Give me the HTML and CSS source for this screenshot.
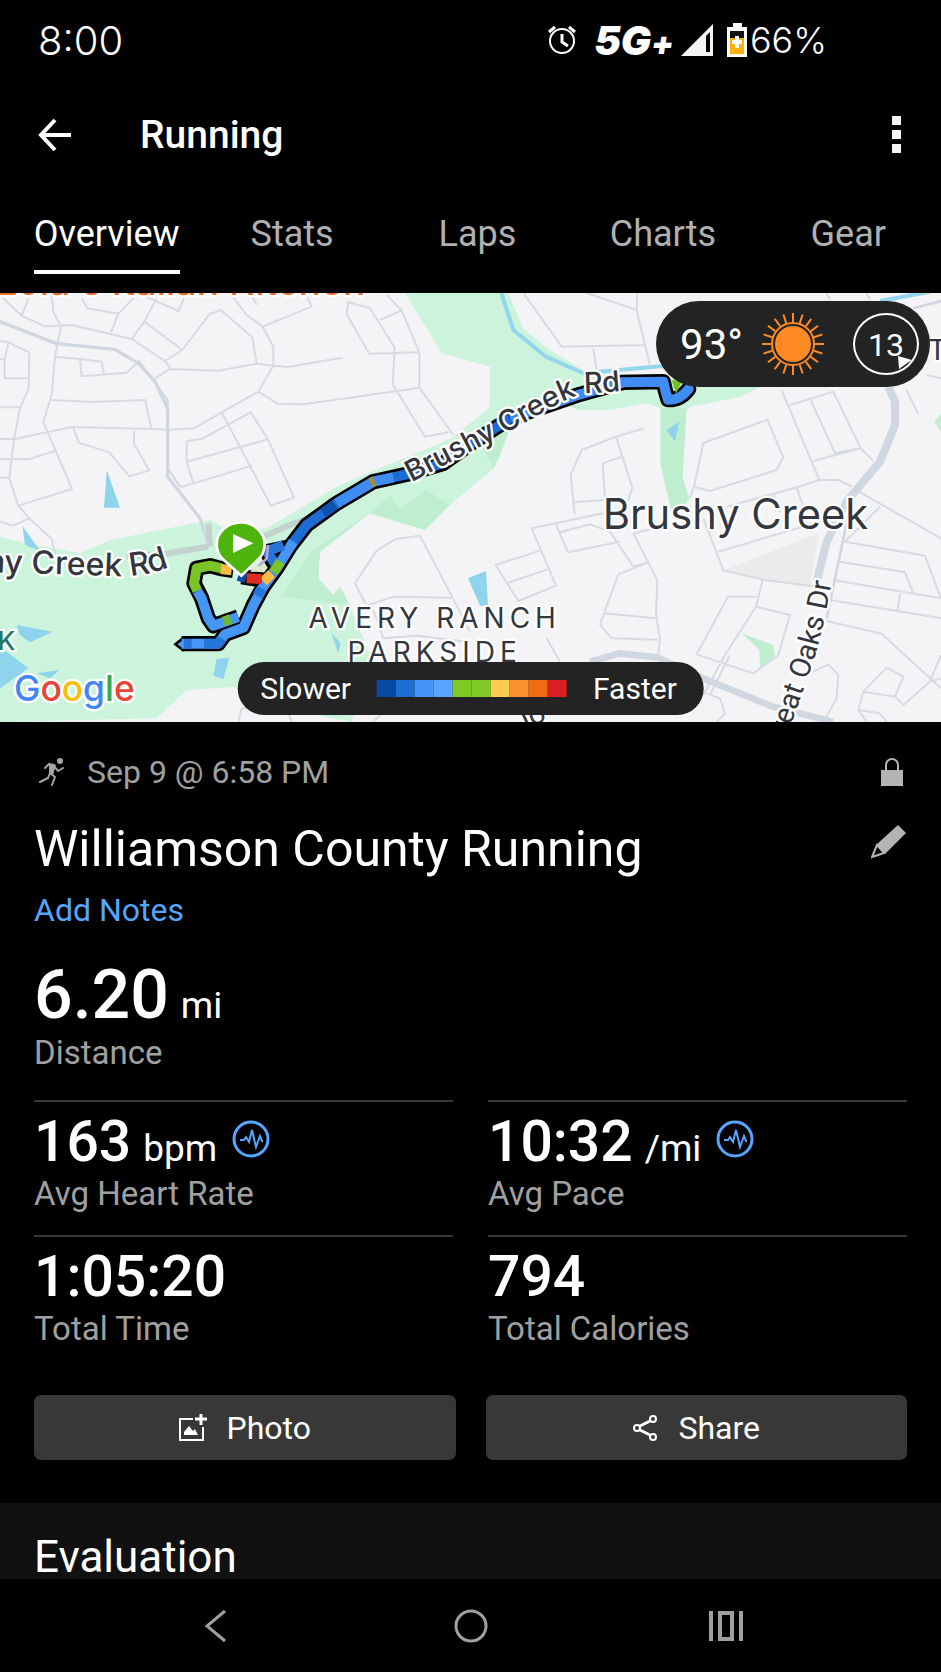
FILE: index.html
```html
<!DOCTYPE html>
<html lang="en">

<head>
  <meta charset="UTF-8">
  <meta name="viewport" content="width=device-width, initial-scale=1.0">
  <title>Running</title>
  <link rel="stylesheet" href="styles.css">
</head>

<body>
  <div class="status-bar">
    <span class="clock">8:00</span>
    <div class="status-icons">
      <svg class="alarm" viewBox="0 0 28 30" width="28" height="30">
        <circle cx="14" cy="16" r="12" fill="none" stroke="#fff" stroke-width="2" />
        <path d="M14 9v8l6 4M1 7l6-5M27 7l-6-5" fill="none" stroke="#fff" stroke-width="3" />
      </svg>
      <span class="network">5G<small>+</small></span>
      <svg class="signal" viewBox="0 0 32 32" width="32" height="32">
        <path d="M0 32L32 0V32Z" fill="#f4f4f4" />
        <path d="M25 12L29 8V28H25Z" fill="#000" />
      </svg>
      <svg class="battery" viewBox="0 0 20 34" width="20" height="34">
        <path d="M6 0h9v4h5v30H0V4h6z" fill="#fff" />
        <path d="M3 8h14v7H3z" fill="#111" />
        <path d="M3 15h14v16H3z" fill="#fdb10b" />
        <path d="M8 13h4v4h3v4h-3v4H8v-4H5v-4h3z" fill="#fff" />
      </svg>
      <span class="percent">66%</span>
    </div>
  </div>

  <header class="app-bar">
    <button class="icon-btn" aria-label="Back">
      <svg viewBox="0 0 34 34" width="34" height="34">
        <path d="M17 2L3 17l14 15M3 17h30" fill="none" stroke="#fff" stroke-width="4" />
      </svg>
    </button>
    <h1>Running</h1>
    <button class="icon-btn" aria-label="More options">
      <svg viewBox="0 0 10 38" width="10" height="38">
        <path d="M1 0h9v9H1zM1 14h9v9H1zM1 28h9v9H1z" fill="#f4f4f4" />
      </svg>
    </button>
  </header>

  <nav class="tabs">
    <a class="active" href="#overview">Overview</a>
    <a href="#stats">Stats</a>
    <a href="#laps">Laps</a>
    <a href="#charts">Charts</a>
    <a href="#gear">Gear</a>
  </nav>

  <main id="overview">
    <section class="map">
      <svg class="map-canvas" viewBox="0 24 2823 1287" preserveAspectRatio="xMidYMid slice">
        <defs>
          <path id="road-a" d="M-400 790Q-160 860 30 864T360 874Q440 874 508 846" />
          <path id="road-b" d="M1234 592Q1350 532 1450 480T1640 376T1770 324T1980 306" />
          <path id="road-c" d="M2300 1520Q2345 1400 2378 1306T2436 1140T2480 970T2500 850" />
        </defs>

        <rect y="24" width="2823" height="1287" fill="#f4f4f6" />

        <!-- parks -->
        <path fill="#ccf4dc" d="M0 755L80 775L240 805L330 765L630 705L690 740L800 730L1020 600L1150 545L1350 462L1410 415L1468 370L1470 245L1325 205L1215 24H1525L1570 130L1640 190L1750 255L1990 280L2290 300L2225 335L2070 365L2056 385L2048 580L2068 640L2050 668H2012L1982 540V370L1940 355L1830 375H1740L1700 360L1530 430L1500 510L1482 550L1350 660L1275 735L1110 685L960 800L955 880L1000 930L1020 905L1060 990L1120 1130L1055 1311L945 1290L715 1205L560 1215L470 1300L0 1311Z" />
        <path fill="#bfeecf" d="M845 935L930 800L1110 685L1170 630L1200 670L1280 615L1350 660L1482 550L1440 480L1530 400L1700 330L1740 375L1700 360L1530 430L1500 510L1482 550L1350 660L1275 735L1110 685L960 800L955 880L1000 930L1020 905L1050 960Z" />
        <path fill="#bfeecf" d="M1982 370H2060L2048 580L2068 640L2050 668H2012L1982 540ZM2803 410L2823 385V440ZM2225 1045L2320 1080L2325 1112L2280 1148L2278 1095Z" />
        <path fill="#ebebec" d="M2172 856L2456 744L2430 903L2290 884Z" />

        <!-- water -->
        <path fill="none" stroke="#93d6ee" stroke-width="12" d="M1504 24L1540 135L1635 213L1750 265L1990 243M2640 48L2790 20" />
        <path fill="#8dd4ec" d="M320 555L312 668H360ZM67 722L75 780L120 797ZM50 1020L158 1040L90 1072L60 1050ZM0 1085L85 1150L0 1210ZM110 1165L178 1155L150 1180ZM650 1122L688 1118L670 1182L640 1172ZM995 1045L1022 1075L1014 1105ZM1404 880L1458 858L1464 962L1440 962ZM2000 435L2038 410L2025 470Z" />

        <!-- streets -->
        <g class="streets">
          <path d="M10 40L65 92L135 124L215 120L395 162L495 228L512 250L465 280M85 40L65 92M155 30L160 80L183 125L165 215L155 330L130 412L167 497L216 612L55 662M245 40L262 70L355 86M400 40L355 86L333 143M470 40L433 110L395 162M433 110L547 195L495 228M440 36L535 78L552 40M547 195L628 88L662 75L757 157L770 236L655 257L512 252M695 30L740 90L788 125L820 185V242L775 320L665 382L583 430L505 434L455 432L215 426L45 462L0 462M757 35L770 60M788 125L935 65L920 30M770 236L862 246L1028 218M775 320L833 356L910 358L1260 308M1040 50L1110 70L1184 188L1178 298L1275 455L1345 442M1045 50L1040 88L1108 206L1258 202V308L1360 450M1160 30L1205 76L1258 202M1140 105L1205 76" />
          <path d="M0 168L25 172L88 203L86 310L60 370L42 462L28 580L55 662L88 700L155 762L168 815M25 172L14 222V280H86M0 222H14M0 367H60M0 522L85 523L167 497M0 578H28M88 700L40 722L0 710M165 215L240 222L305 230L312 268M240 222L245 274L380 263L410 235M155 345L280 351L435 345L455 432M220 428L236 473L328 502L388 574L448 556L402 477V437M560 468L605 462L752 382L804 463L882 638L813 662L665 382M560 468V530L580 595M560 530L804 463M540 607L757 542" />
          <path d="M1100 962L1065 895L1130 797L1185 763L1260 752L1358 938L1180 935ZM1358 938L1410 1040M1120 975L1150 1060L1250 1052L1400 1070M715 1311L725 1270H860L875 1311M1120 1311L1160 1270" />
          <path d="M1570 24L1685 185L1935 180L1910 75L1760 24M1912 24L1910 75M1780 190L1790 260M1935 180L1950 240M1932 430L1848 455L1745 495L1712 570L1724 688M1848 455L1897 608L1870 690M1866 515L1808 535L1815 645L1720 652M1810 685L1595 730L1668 902L1555 948L1487 840L1620 797M1520 895L1642 853M1665 712L1704 802L1860 770M1680 742L1770 718L1830 740L1900 845L1945 832M1900 745L1972 885L1968 990L1980 1060L1975 1110M1945 832L1855 868L1800 1018L1835 1060L1975 1064M1810 985L1968 1000M1900 745L1985 725M1640 1060L1680 1130M2070 640L2082 605L2110 474L2302 404L2350 517L2330 555L2130 618L2082 605M2110 700L2170 856L2290 884L2450 905M2155 800L2440 716M2180 665L2390 607L2458 585H2515L2555 605M2320 625L2340 680M2390 607L2415 680M2345 315L2458 585M2370 360L2500 320L2582 490L2620 527M2432 345L2505 505L2582 490L2440 528M2720 315L2755 388M2580 622L2823 760M2640 665L2535 770L2775 812L2823 940M2520 830L2715 862L2740 925M2500 885L2823 940M2700 925L2692 978L2490 945M2692 978L2823 1000M2480 1008L2645 1046L2823 1210M2288 884L2268 965L2370 990L2335 1110L2260 1165L2090 1108L2184 935H2270M2268 965L2175 1110L2110 1230M2190 1110L2130 1230M2440 1160L2485 1138L2515 1170L2510 1240L2470 1311M2660 1148L2590 1220L2575 1275L2600 1311M2660 1148L2710 1175L2685 1235L2590 1220M2790 1190L2710 1260L2685 1235M2823 1110L2790 1190M2823 1180L2790 1190M2575 1275L2640 1285L2660 1311M2120 1225L2160 1240L2175 1285L2150 1311M2480 24L2490 45M2600 24L2610 45M2780 270L2823 280" />
        </g>
        <g class="avenues">
          <path d="M0 110L170 176L345 193L415 235L465 290L503 370V575L530 610L600 700L625 780" />
          <path d="M415 225L503 345V550L540 605" stroke-width="6" />
          <path stroke-width="18" stroke="#c3d2cf" d="M625 785L505 805L380 815M625 715L630 785M790 755L870 720L950 690" />
          <path stroke-width="24" d="M2665 305L2685 350V420L2640 530L2540 650L2480 770L2450 890" />
          <path stroke-width="8" d="M2545 690L2480 1000M2740 70L2823 48" />
          <path stroke-width="20" d="M1770 1130L1860 1105L1975 1118L2110 1180L2310 1262L2500 1311" />
        </g>

        <!-- route: dark casing, then pace colours -->
        <g class="casing">
          <path d="M1865 292L1990 290Q1996 320 2004 344Q2040 346 2066 312" stroke-linecap="round" />
          <path d="M1870 292L1740 328L1530 400L1410 478L1330 535L1220 568L1120 590L1010 655L920 720L870 785L830 850L790 905L760 960L730 1028L675 1048L655 1076H545" />
          <path d="M870 785L800 800L825 840M790 885L725 875M700 856L660 850L630 842L590 850L582 895L605 940L625 1000L640 1022L715 996" />
        </g>
        <path d="M550 1054L520 1078L550 1101Z" fill="#000" />
        <path d="M550 1064L532 1078L550 1091Z" fill="#5ba4ee" />
        <g class="pace">
          <path stroke="#3f8df2" stroke-linecap="round" d="M1865 292L1990 290Q1996 320 2004 344Q2040 346 2066 312" />
          <path stroke="#3f8df2" d="M1870 292L1740 328L1530 400" />
          <path stroke="#1d6cd3" d="M1530 400L1410 478L1330 535L1220 568L1120 590L1010 655L920 720L870 785" />
          <path stroke="#3f8df2" d="M1180 577L1120 590L1010 655" />
          <path stroke="#0e51ad" d="M1005 660L970 685" />
          <path stroke="#a68e34" d="M1124 588L1112 594" />
          <path stroke="#4596f5" d="M880 770L830 850L790 905L760 960L730 1028L675 1048L655 1076H545" />
          <path stroke="#2575db" d="M850 780L800 800L825 835M785 910L772 932M665 1060L655 1076L612 1077M575 1077H552" />
          <path stroke="#7bc327" d="M842 830L820 862M665 850L630 842L590 850L582 895L592 918" />
          <path stroke="#fdbb42" d="M815 866L790 890M695 856L663 852" />
          <path stroke="#e02b20" d="M785 882L740 880" />
          <path stroke="#1547a0" d="M738 880L715 872" />
          <path stroke="#4596f5" d="M592 918L605 940L625 1000L640 1022L715 996" />
          <path stroke="#6fb432" d="M670 1010L692 1002" />
        </g>
        <path d="M2015 285L2045 290L2028 326Z" fill="#72c41c" />

        <!-- start pin -->
        <path d="M770 850L800 820L804 780" fill="none" stroke="#b9a4d6" stroke-width="8" />
        <path d="M770 842L800 845L790 862L750 860Z" fill="#dfe8c8" />
        <path d="M724 872L672 826A72 66 0 1 1 772 826Z" fill="#4cb40b" stroke="#fff" stroke-width="8" />
        <path d="M699 747V804L760 775Z" fill="#fff" />

        <!-- labels -->
        <text class="place orange" x="1096" y="30" text-anchor="end">Lola's Italian Kitchen</text>
        <text class="place city" x="1808" y="732">Brushy Creek</text>
        <text class="area" x="1304" y="1030" text-anchor="middle">AVERY RANCH</text>
        <text class="area" x="1304" y="1132" text-anchor="middle">PARKSIDE</text>
        <text class="road wide"><textPath href="#road-a" startOffset="100%" text-anchor="end">Brushy Creek Rd</textPath></text>
        <text class="road"><textPath href="#road-b">Brushy Creek Rd</textPath></text>
        <text class="street-name"><textPath href="#road-c" startOffset="94%" text-anchor="end">Great Oaks Dr</textPath></text>
        <text class="street-name" x="1555" y="1345" transform="rotate(-25 1555 1345)">Jo</text>
        <text class="street-name" x="2786" y="224">T</text>
        <text class="place teal" x="46" y="1095" text-anchor="end">PARK</text>
        <text class="logo" x="42" y="1248"><tspan fill="#4285f4">G</tspan><tspan fill="#ea4335">o</tspan><tspan fill="#fbbc05">o</tspan><tspan fill="#4285f4">g</tspan><tspan fill="#34a853">l</tspan><tspan fill="#ea4335">e</tspan></text>
      </svg>

      <div class="weather">
        <span class="temp">93°</span>
        <svg class="sun" viewBox="-32 -32 64 64" width="64" height="64">
          <circle r="18" fill="#ff8a24" />
          <circle r="21" fill="none" stroke="#ff8a24" stroke-width="2" />
          <g stroke="#ff8a24" stroke-width="2">
            <path id="rays" d="M0-22V-31M0 22V31M-22 0H-31M22 0H31" />
            <use href="#rays" transform="rotate(18)" />
            <use href="#rays" transform="rotate(36)" />
            <use href="#rays" transform="rotate(54)" />
            <use href="#rays" transform="rotate(72)" />
          </g>
        </svg>
        <span class="wind">13
          <svg viewBox="0 0 14 14" width="14" height="14"><path d="M0 0L14 4L8 8L1 13Z" fill="#fff" /></svg>
        </span>
      </div>

      <div class="legend">
        <span>Slower</span>
        <div class="scale">
          <i class="s1"></i><i class="s2"></i><i class="s3"></i><i class="s4"></i><i class="s5"></i>
          <i class="s5"></i><i class="s6"></i><i class="s7"></i><i class="s8"></i><i class="s9"></i>
        </div>
        <span>Faster</span>
      </div>
    </section>

    <section class="activity">
      <div class="row date">
        <svg viewBox="0 0 28 30" width="28" height="30">
          <circle cx="22" cy="4" r="3" fill="#a6a6a6" />
          <path d="M7 11L11 7L16 8L12 16L17 20L14 28M16 9L20 14L25 11M12 16L10 21L2 25" fill="none" stroke="#a6a6a6" stroke-width="2" stroke-linecap="round" stroke-linejoin="round" />
          <path d="M11 7L18 8L15 18L11 17Z" fill="#a6a6a6" />
        </svg>
        <span>Sep 9 @ 6:58 PM</span>
        <svg class="end lock" viewBox="0 0 22 28" width="22" height="28">
          <path d="M5 13V7a6 6 0 0 1 12 0v6" fill="none" stroke="#b4b4b4" stroke-width="2" />
          <path d="M0 12h22v16H0z" fill="#b4b4b4" />
        </svg>
      </div>

      <div class="row title">
        <h2>Williamson County Running</h2>
        <button class="icon-btn end" aria-label="Edit name">
          <svg viewBox="0 0 36 34" width="36" height="34">
            <path d="M27 0L35 8L14 29L5 20Z" fill="#b4b4b4" />
            <path d="M6 20L1 32L13 28Z" fill="#000" stroke="#b4b4b4" stroke-width="2" />
          </svg>
        </button>
      </div>

      <a class="notes" href="#notes">Add Notes</a>

      <div class="distance">
        <p class="value">6.20 <small>mi</small></p>
        <p class="label">Distance</p>
      </div>

      <div class="stats">
        <div class="stat">
          <p class="value">163 <small>bpm</small>
            <svg class="pulse" viewBox="0 0 38 38" width="38" height="38">
              <circle cx="19" cy="19" r="17" />
              <path d="M8 20h4l2-3l3 5l3-12l4 17l4-11l2 5h1" />
            </svg>
          </p>
          <p class="label">Avg Heart Rate</p>
        </div>
        <div class="stat">
          <p class="value">10:32 <small>/mi</small>
            <svg class="pulse" viewBox="0 0 38 38" width="38" height="38">
              <circle cx="19" cy="19" r="17" />
              <path d="M8 20h4l2-3l3 5l3-12l4 17l4-11l2 5h1" />
            </svg>
          </p>
          <p class="label">Avg Pace</p>
        </div>
        <div class="stat">
          <p class="value">1:05:20</p>
          <p class="label">Total Time</p>
        </div>
        <div class="stat">
          <p class="value">794</p>
          <p class="label">Total Calories</p>
        </div>
      </div>

      <div class="actions">
        <button>
          <svg viewBox="0 0 28 27" width="28" height="27">
            <path d="M14 5H1V26H24V13" fill="none" stroke="#fff" stroke-width="2" />
            <path d="M22 0v11M16 5h12" fill="none" stroke="#fff" stroke-width="3" />
            <path d="M5 21V18L10 12L14 17L16 15L19 21Z" fill="#fff" />
          </svg>
          Photo
        </button>
        <button>
          <svg viewBox="0 0 26 28" width="26" height="28">
            <g fill="none" stroke="#fff" stroke-width="2">
              <circle cx="5" cy="14" r="3" />
              <circle cx="21" cy="5" r="3" />
              <circle cx="21" cy="23" r="3" />
              <path d="M8 12L18 7M8 16L18 21" stroke-width="3" />
            </g>
          </svg>
          Share
        </button>
      </div>
    </section>

    <section class="evaluation">
      <h2>Evaluation</h2>
    </section>
  </main>

  <footer class="nav-bar">
    <button class="icon-btn" aria-label="Back">
      <svg viewBox="0 0 34 34" width="34" height="34">
        <path d="M26 2L8 17l18 15" fill="none" stroke="#a0a0a0" stroke-width="3" />
      </svg>
    </button>
    <button class="icon-btn" aria-label="Home">
      <svg viewBox="0 0 34 34" width="34" height="34">
        <circle cx="17" cy="17" r="15" fill="none" stroke="#a0a0a0" stroke-width="3" />
      </svg>
    </button>
    <button class="icon-btn" aria-label="Recent apps">
      <svg viewBox="0 0 34 34" width="34" height="34">
        <path d="M2 2v30M32 2v30M11 4h12v26H11z" fill="none" stroke="#a0a0a0" stroke-width="4" />
      </svg>
    </button>
  </footer>
</body>

</html>
```
FILE: styles.css
```css
body {
  margin: 0;
  min-height: 100vh;
  background: #000;
  color: #fff;
  font-family: Roboto, 'Liberation Sans', sans-serif;
  display: flex;
  flex-direction: column;
}

h1,
h2,
p {
  margin: 0;
  font-weight: 400;
}

svg {
  display: block;
  flex: none;
}

button {
  font: inherit;
  color: inherit;
  border: 0;
  cursor: pointer;
}

a {
  text-decoration: none;
}

.icon-btn {
  background: none;
  padding: 0;
}

/* status bar */
.status-bar {
  height: 80px;
  padding: 0 114px 0 38px;
  box-sizing: border-box;
  display: flex;
  align-items: center;
  justify-content: space-between;
  font-family: Inter, Roboto, sans-serif;
  font-size: 36px;
  font-weight: 300;
}

.clock {
  font-size: 40px;
}

.status-icons {
  display: flex;
  align-items: center;
}

.network {
  margin: 0 7px 0 18px;
  font-size: 40px;
  font-weight: 900;
  font-style: italic;
}

.network small {
  font-size: 33px;
}

.battery {
  margin: 0 3px 0 14px;
}

/* app bar */
.app-bar {
  height: 110px;
  padding: 0 40px 0 38px;
  display: flex;
  align-items: center;
}

.app-bar h1 {
  flex: 1;
  margin-left: 68px;
  font-size: 39px;
  font-weight: 500;
}

.tabs {
  display: grid;
  grid-template-columns: repeat(5, 1fr);
  justify-items: center;
  padding: 22px 0 19px 14px;
  font-size: 36px;
  line-height: 44px;
}

.tabs a {
  color: #b0b0b0;
  padding-bottom: 14px;
  border-bottom: 4px solid transparent;
}

.tabs .active {
  color: #fff;
  border-color: #fff;
}

/* map */
.map {
  position: relative;
  overflow: hidden;
}

.map-canvas {
  width: 100%;
  height: auto;
}

.streets,
.avenues,
.casing,
.pace {
  fill: none;
  stroke-linejoin: round;
}

.streets {
  stroke: #d5dae3;
  stroke-width: 6;
}

.avenues {
  stroke: #d0d7e1;
  stroke-width: 10;
}

.casing {
  stroke: #000;
  stroke-width: 46;
}

.pace {
  stroke-width: 30;
}

.map text {
  font-family: Inter, Roboto, sans-serif;
  font-weight: 500;
  fill: #33363c;
  stroke: #fff;
  stroke-width: 14;
  stroke-linejoin: round;
  paint-order: stroke;
}

.map .city {
  font-size: 125px;
  font-weight: 400;
}

.map .orange {
  font-size: 112px;
  fill: #e8702a;
}

.map .teal {
  font-size: 78px;
  fill: #1f7a63;
}

.map .area {
  font-size: 84px;
  font-weight: 400;
  letter-spacing: 15px;
}

.map .road {
  font-size: 87px;
}

.map .wide {
  font-size: 96px;
}

.map .street-name {
  font-family: Roboto, sans-serif;
  font-size: 87px;
  font-weight: 400;
}

.map .logo {
  font-size: 106px;
}

.weather,
.legend {
  position: absolute;
  display: flex;
  align-items: center;
  background: #232323;
}

.weather {
  top: 8px;
  right: 11px;
  height: 86px;
  padding: 0 11px 0 24px;
  border-radius: 43px;
  box-sizing: border-box;
}

.temp {
  font-size: 42px;
}

.sun {
  margin: 0 28px 0 18px;
}

.wind {
  position: relative;
  width: 66px;
  height: 62px;
  box-sizing: border-box;
  border: 2px solid #fff;
  border-radius: 50%;
  font-size: 32px;
  line-height: 60px;
  text-align: center;
}

.wind svg {
  position: absolute;
  right: 5px;
  bottom: 3px;
}

.legend {
  bottom: 7px;
  left: 50%;
  transform: translateX(-50%);
  height: 53px;
  gap: 26px;
  padding: 0 27px 0 23px;
  border-radius: 27px;
  font-size: 30px;
}

.scale {
  display: flex;
}

.scale i {
  width: 19px;
  height: 17px;
}

.s1 { background: #0549a3; }
.s2 { background: #1c6fd0; }
.s3 { background: #4794f8; }
.s4 { background: #58a5fb; }
.s5 { background: #80ca25; }
.s6 { background: #fccc4f; }
.s7 { background: #fb902e; }
.s8 { background: #ef6c15; }
.s9 { background: #da1f27; }

/* activity */
.activity {
  padding: 30px 34px 43px;
}

.row {
  display: flex;
  align-items: center;
}

.end {
  margin-left: auto;
}

.date {
  padding-left: 4px;
  gap: 21px;
  font-size: 32px;
  line-height: 40px;
  color: #a0a0a0;
}

.lock {
  margin-right: 4px;
}

.title {
  margin: 27px 0 11px;
  align-items: flex-start;
}

.title h2 {
  font-size: 50px;
  line-height: 60px;
}

.title .end {
  padding-top: 6px;
}

.notes {
  display: block;
  font-size: 32px;
  line-height: 40px;
  color: #55a6ff;
}

.value {
  display: flex;
  align-items: baseline;
  gap: 12px;
  font-size: 57px;
  line-height: 60px;
  font-weight: 500;
}

.value small {
  font-size: 37px;
  line-height: 40px;
  font-weight: 400;
}

.label {
  margin-top: 2px;
  font-size: 33px;
  line-height: 40px;
  color: #a0a0a0;
}

.distance {
  margin: 29px 0 27px;
}

.distance .value {
  font-size: 68px;
  line-height: 72px;
}

.stats {
  display: grid;
  grid-template-columns: 1fr 1fr;
  column-gap: 35px;
}

.stat {
  padding: 10px 0 21px;
  border-top: 2px solid #383838;
}

.pulse {
  align-self: center;
  margin: 0 0 6px 3px;
  fill: none;
  stroke: #55a6ff;
  stroke-width: 3;
}

.pulse path {
  stroke-width: 2;
}

.actions {
  display: grid;
  grid-template-columns: 1fr 1fr;
  gap: 30px;
  margin-top: 25px;
}

.actions button {
  display: flex;
  align-items: center;
  justify-content: center;
  gap: 20px;
  height: 65px;
  border-radius: 7px;
  background: #383838;
  font-size: 32px;
}

.evaluation {
  padding: 32px 34px 0;
  background: #111;
}

.evaluation h2 {
  font-size: 44px;
  line-height: 44px;
}

/* system navigation */
.nav-bar {
  height: 93px;
  margin-top: auto;
  padding: 0 88px;
  display: flex;
  align-items: center;
  justify-content: space-around;
}
```
